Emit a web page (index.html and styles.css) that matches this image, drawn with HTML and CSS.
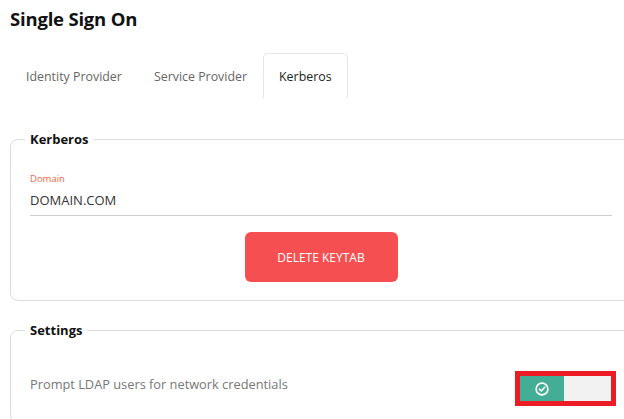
FILE: index.html
```html
<!DOCTYPE html>
<html lang="en">
<head>
<meta charset="utf-8">
<title>Single Sign On</title>
<link rel="stylesheet" href="styles.css">
</head>
<body>
<div class="page">
  <h1 class="title">Single Sign On</h1>
  <nav class="tabs">
    <div class="tab">Identity Provider</div>
    <div class="tab">Service Provider</div>
    <div class="tab tab-active">Kerberos</div>
  </nav>
  <fieldset class="group group-kerberos">
    <legend class="group-title">Kerberos</legend>
    <div class="field">
      <label class="field-label">Domain</label>
      <div class="field-value">DOMAIN.COM</div>
    </div>
    <div class="actions">
      <button class="btn-danger">DELETE KEYTAB</button>
    </div>
  </fieldset>
  <fieldset class="group group-settings">
    <legend class="group-title">Settings</legend>
    <div class="setting-row">
      <span class="setting-label">Prompt LDAP users for network credentials</span>
      <div class="toggle-outline">
        <div class="toggle">
          <div class="toggle-on">
            <svg width="14" height="14" viewBox="0 0 14 14" fill="none" stroke="#fff" stroke-width="1.6">
              <circle cx="7" cy="7" r="5.9"/>
              <path d="M4.4 7.2 L6.3 9 L9.7 5.2" stroke-linecap="round" stroke-linejoin="round"/>
            </svg>
          </div>
          <div class="toggle-off"></div>
        </div>
      </div>
    </div>
  </fieldset>
</div>
</body>
</html>
```

FILE: styles.css
```css
html, body {
  margin: 0;
  padding: 0;
  background: #fff;
  overflow: hidden;
}
body {
  font-family: "Open Sans", "Noto Sans", sans-serif;
  color: #333;
}
.page {
  width: 690px;
  padding: 0 0 0 10px;
}
.title {
  margin: 0;
  padding-top: 8px;
  font-size: 18.5px;
  line-height: 22px;
  font-weight: 700;
  color: #111;
  letter-spacing: -0.2px;
}
.tabs {
  display: flex;
  margin-top: 23px;
  height: 45px;
}
.tab {
  padding: 0 15px;
  font-size: 12.4px;
  line-height: 45px;
  color: #666;
  border: 1px solid transparent;
  border-bottom: none;
  border-radius: 5px 5px 0 0;
}
.tab-active {
  color: #222;
  border-color: #e6e6e6;
}
.group {
  margin: 0;
  border: 1px solid #dcdcdc;
  border-radius: 8px;
  padding: 0 60px 0 19px;
}
.group-kerberos {
  margin-top: 32px;
  padding-bottom: 18px;
}
.group-settings {
  margin-top: 20px;
  height: 100px;
}
.group-title {
  padding: 0 5px;
  margin-left: -5px;
  font-size: 13px;
  line-height: 18px;
  font-weight: 700;
  color: #111;
}
.field {
  width: 582px;
  padding-top: 24px;
}
.field-label {
  display: block;
  font-size: 9.5px;
  line-height: 14px;
  color: #f2663f;
}
.field-value {
  font-size: 13px;
  line-height: 20px;
  padding: 4px 0 5px;
  border-bottom: 1px solid #cfcfcf;
  color: #333;
}
.actions {
  width: 582px;
  display: flex;
  justify-content: center;
  padding-top: 16px;
}
.btn-danger {
  width: 153px;
  height: 50px;
  border: none;
  border-radius: 6px;
  background: #f54f51;
  color: #fff;
  font-family: "Open Sans", "Noto Sans", sans-serif;
  font-size: 12px;
  font-weight: 500;
  letter-spacing: 0;
}
.setting-row {
  width: 586px;
  display: flex;
  justify-content: space-between;
  align-items: flex-start;
  padding-top: 36px;
}
.setting-label {
  font-size: 12.8px;
  line-height: 18px;
  color: #777;
}
.toggle-outline {
  margin-top: -4px;
  border: 5px solid #ec1c24;
}
.toggle {
  display: flex;
  height: 25px;
}
.toggle-on {
  width: 44px;
  background: #43ad95;
  display: flex;
  align-items: center;
  justify-content: center;
}
.toggle-off {
  width: 47px;
  background: #f2f2f2;
}
```
